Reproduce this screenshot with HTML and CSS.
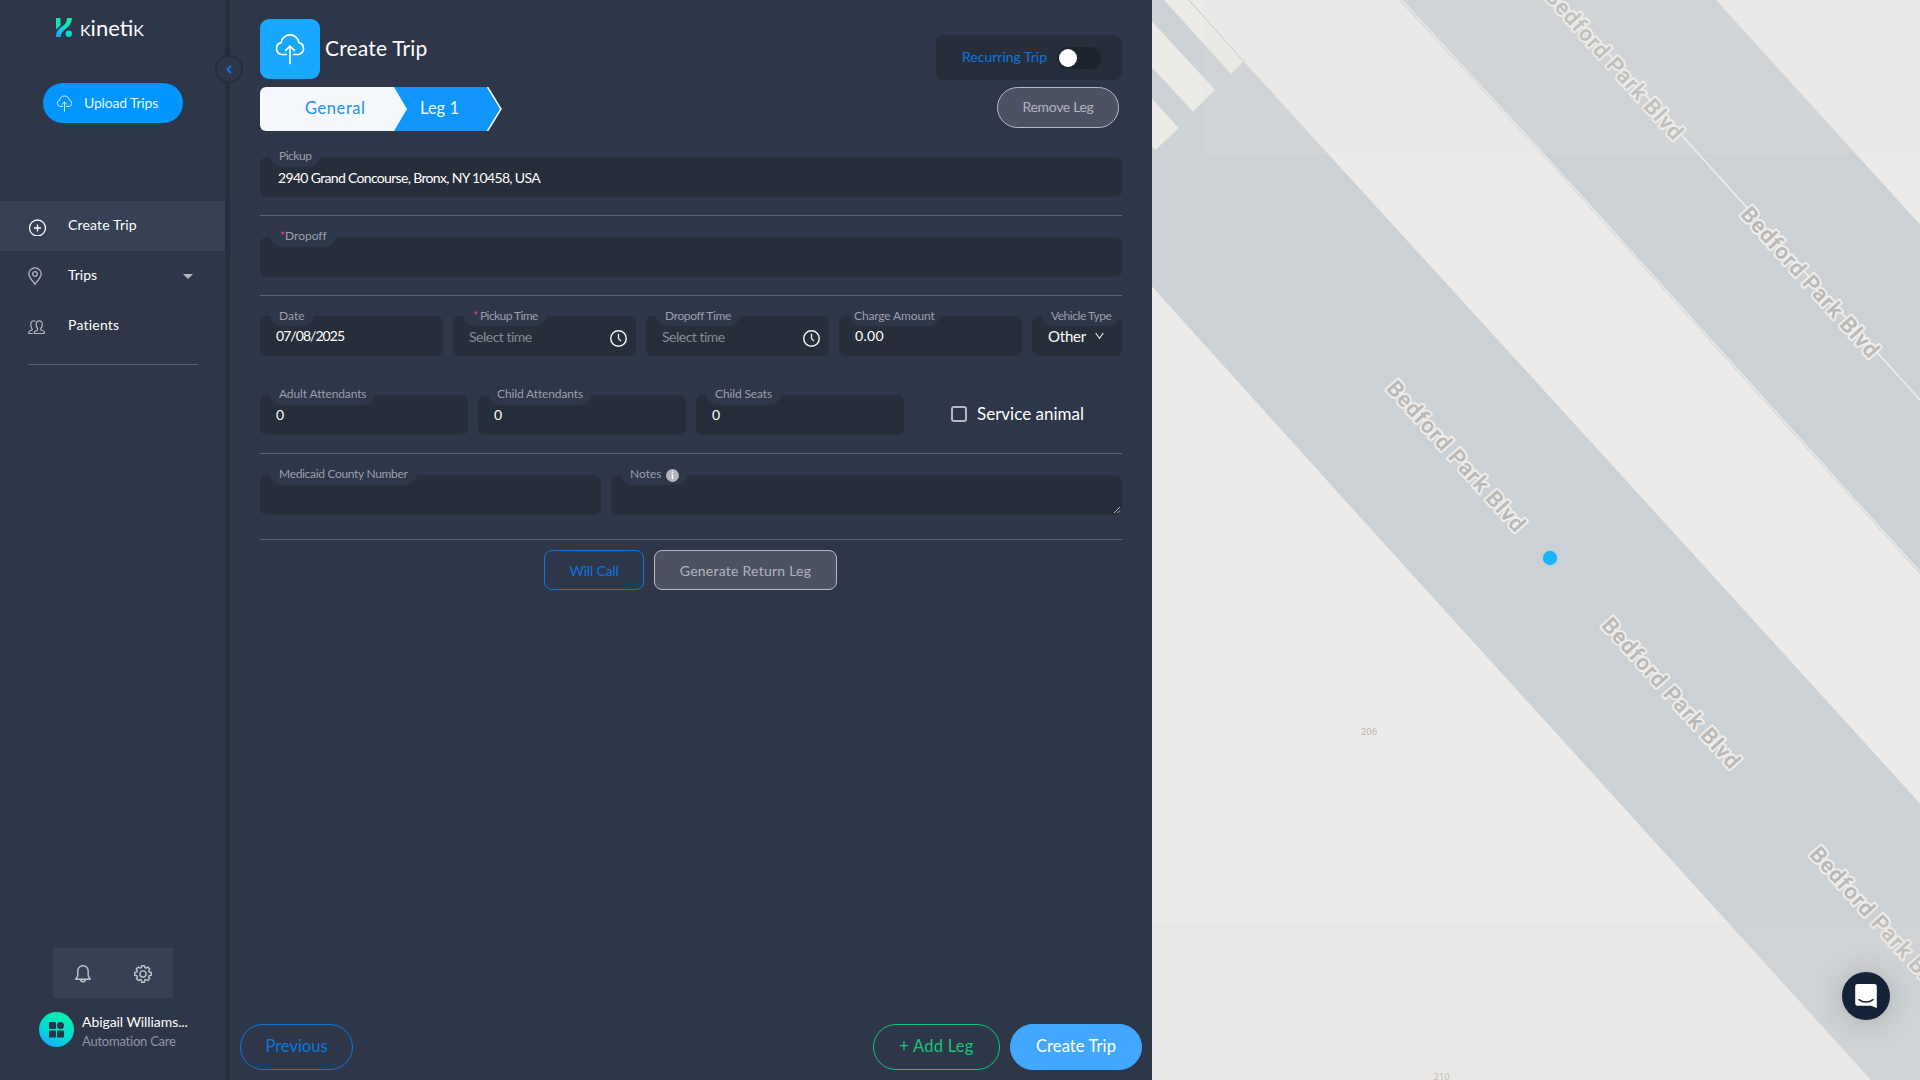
FILE: index.html
```html
<!DOCTYPE html>
<html lang="en">
<head>
<meta charset="utf-8">
<title>Create Trip - Kinetik</title>
<link rel="stylesheet" href="styles.css">
</head>
<body>
<svg class="defs" width="0" height="0" aria-hidden="true">
  <defs>
    <linearGradient id="brand" x1="0.7" y1="0" x2="0.2" y2="1">
      <stop offset="0" stop-color="#0ff0a8"/><stop offset="0.55" stop-color="#00dcd2"/><stop offset="1" stop-color="#1ea5ff"/>
    </linearGradient>
    <symbol id="cloud" viewBox="0 0 32 32">
      <g fill="none" stroke="currentColor" stroke-width="1.7" stroke-linecap="round" stroke-linejoin="round">
        <path d="M12.5 21.5H7.6A6.1 6.1 0 0 1 7 9.6a9.1 9.1 0 0 1 18 0 6.1 6.1 0 0 1-.6 11.900H19.500"/>
        <path d="M16 30.500V13.500M11.500 17.500 16 13l4.500 4.500"/>
      </g>
    </symbol>
    <symbol id="clock" viewBox="0 0 16 16">
      <circle cx="8" cy="8" r="7.300" fill="none" stroke="currentColor" stroke-width="1.400"/>
      <path d="M8 3.500V8l2.300 2.500" fill="none" stroke="currentColor" stroke-width="1.200"/>
    </symbol>
  </defs>
</svg>
<div class="app">
  <aside class="sidebar">
    <div class="logo">
      <svg width="16" height="19" viewBox="0 0 16 19">
        <path d="M0 0H4.500V7.500L0 11.500Z" fill="#0be8b4"/>
        <path d="M15.800 0H11C11 4 9.500 6 6 8.600 2 11.600 0 14 0 19H4.700C4.700 15.500 6.500 13.500 9.500 11 13.500 8 15.800 5 15.800 0Z" fill="url(#brand)"/>
        <circle cx="12.800" cy="15.800" r="3.200" fill="#00dccb"/>
      </svg>
      <span class="wordmark"><span class="small-k">k</span>ineti<span class="small-k">k</span></span>
    </div>
    <button class="upload"><svg width="17" height="17"><use href="#cloud"/></svg><span>Upload Trips</span></button>
    <nav class="menu">
      <a class="item active">
        <svg class="ico" width="20" height="20" viewBox="0 0 20 20" fill="none" stroke="#fff" stroke-width="1.300"><circle cx="9.500" cy="12" r="8"/><path d="M9.500 8.500v7M6 12h7"/></svg>
        <span class="t-create">Create Trip</span>
      </a>
      <a class="item">
        <svg class="ico" width="20" height="20" viewBox="0 0 20 20" fill="none" stroke="#b4b7bd" stroke-width="1.300"><path d="M7 18.300C4 14.300.8 11 .8 8a6.200 6.200 0 0 1 12.400 0c0 3-3.200 6.300-6.200 10.300Z"/><circle cx="7" cy="8" r="2.300"/></svg>
        <span>Trips</span>
        <i class="caret"></i>
      </a>
      <a class="item">
        <svg class="ico" width="20" height="20" viewBox="0 0 20 20" fill="none" stroke="#b4b7bd" stroke-width="1.200"><path d="M9 14.500c-1 .3-2.200.6-2.700 1.300V17.500H16.300V15.800c-.4-1-2-1.300-3.500-1.800v-1.500c1-1 1.700-2.300 1.500-4.500C14.300 6 13 4.800 11.200 4.800S8.200 6 8.200 8c-.1 2.200.4 3.500 1.400 4.500V14Z"/><path d="M7.500 5.200C4.800 4 2.700 5.500 2.800 8.500c0 2 .3 3 1.200 4v1.500C2.500 14.600 1 15 .8 16v1.500h4"/></svg>
        <span class="t-patients">Patients</span>
      </a>
    </nav>
    <hr class="menu-end">
    <div class="tools">
      <svg width="16" height="18" viewBox="0 0 16 18" fill="none" stroke="#c3c5ca" stroke-width="1.400" stroke-linejoin="round"><path d="M.8 14.200H15.200L13.200 11V6.500C13.200 3 11 .8 8 .8S2.800 3 2.800 6.500V11ZM5.700 14.500a2.300 2.300 0 0 0 4.600 0"/></svg>
      <svg width="18" height="18" viewBox="0 0 18 18" fill="none" stroke="#c3c5ca" stroke-width="1.400" stroke-linejoin="round"><circle cx="9" cy="9" r="3.100"/><path d="M7.600.7h2.800l.4 2 1.200.5 1.700-1.100 2 2-1.100 1.700.5 1.200 2.200.4v2.900l-2.200.4-.5 1.200 1.100 1.700-2 2-1.700-1.100-1.200.5-.4 2.200H7.600l-.4-2.200-1.200-.5-1.700 1.100-2-2 1.100-1.700-.5-1.200-2.200-.4V7.400l2.200-.4.5-1.200-1.100-1.700 2-2L6 3.200l1.200-.5Z"/></svg>
    </div>
    <div class="user">
      <svg width="35" height="35" viewBox="0 0 35 35"><circle cx="17.500" cy="17.500" r="17.500" fill="url(#brand)"/><g fill="#2a3549"><rect x="10" y="10" width="7" height="7" rx="1"/><circle cx="21.500" cy="13.500" r="3.500"/><rect x="10" y="18.500" width="7" height="7" rx="1"/><rect x="18" y="18.500" width="7" height="7" rx="1"/></g></svg>
      <div><div class="user-name">Abigail Williams...</div><div class="user-org">Automation Care</div></div>
    </div>
  </aside>
  <div class="divider">
    <button class="collapse"><svg width="6" height="9" viewBox="0 0 6 9"><path d="M5 .8 1.300 4.500 5 8.200" fill="none" stroke="#0d7ae6" stroke-width="1.900"/></svg></button>
  </div>
  <main class="main">
    <header class="head">
      <div class="head-left">
        <div class="title-row">
          <div class="badge"><svg width="32" height="32"><use href="#cloud"/></svg></div>
          <h1>Create Trip</h1>
        </div>
        <svg class="steps" width="242" height="44" viewBox="0 0 242 44">
          <path d="M130 0H227L241 22 227 44H130Z" fill="#0f95fb"/>
          <path d="M227.500 0 241 22 227.500 44" fill="none" stroke="#fff" stroke-width="1.500"/>
          <path d="M6 0H134L147 22 134 44H6A6 6 0 0 1 0 38V6A6 6 0 0 1 6 0Z" fill="#f5f8fd"/>
          <text x="45" y="27" fill="#1893f5" textLength="60">General</text>
          <text x="160" y="27" fill="#eaf5ff" textLength="39">Leg 1</text>
        </svg>
      </div>
      <div class="head-right">
        <div class="recurring"><span>Recurring Trip</span><i class="switch"></i></div>
        <button class="btn muted remove">Remove Leg</button>
      </div>
    </header>

    <section class="row row-pickup">
      <div class="field"><label class="t-pickup">Pickup</label><span class="value t-address">2940 Grand Concourse, Bronx, NY 10458, USA</span></div>
    </section>
    <section class="row row-dropoff">
      <div class="field"><label class="t-dropoff"><b>*</b>Dropoff</label></div>
    </section>
    <section class="row row-times">
      <div class="field"><label class="t-date">Date</label><span class="value t-day">07/08/2025</span></div>
      <div class="field"><label class="t-ptime"><b>*</b> Pickup Time</label><span class="value hint">Select time</span><svg class="clock" width="17" height="17"><use href="#clock"/></svg></div>
      <div class="field"><label class="t-dtime">Dropoff Time</label><span class="value hint">Select time</span><svg class="clock" width="17" height="17"><use href="#clock"/></svg></div>
      <div class="field"><label class="t-charge">Charge Amount</label><span class="value t-amount">0.00</span></div>
      <div class="field"><label class="t-vehicle">Vehicle Type</label><span class="value t-other">Other</span><svg class="chev" width="9" height="8" viewBox="0 0 9 8"><path d="M.7 1 4.500 6.300 8.300 1" fill="none" stroke="#e6e8eb" stroke-width="1.100"/></svg></div>
    </section>
    <section class="row row-people">
      <div class="field"><label>Adult Attendants</label><span class="value t-count">0</span></div>
      <div class="field"><label>Child Attendants</label><span class="value t-count">0</span></div>
      <div class="field"><label>Child Seats</label><span class="value t-count">0</span></div>
      <div class="check"><i></i><span>Service animal</span></div>
    </section>
    <section class="row row-notes">
      <div class="field"><label class="t-county">Medicaid County Number</label></div>
      <div class="field"><label class="t-notes">Notes<svg width="13" height="13" viewBox="0 0 13 13"><circle cx="6.500" cy="6.500" r="6.500" fill="#b5b5be"/><path d="M6.500 2.600v1.700M6.500 5.300v4.700" stroke="#fff" stroke-width="1.500"/></svg></label>
        <svg class="grip" width="8" height="8" viewBox="0 0 8 8"><path d="M1 7 7 1M4.500 7 7 4.500" stroke="#c6cad0" stroke-width=".9"/></svg></div>
    </section>
    <div class="leg-actions">
      <button class="btn will">Will Call</button>
      <button class="btn muted generate">Generate Return Leg</button>
    </div>
    <footer class="foot">
      <button class="btn prev">Previous</button>
      <button class="btn add">+ Add Leg</button>
      <button class="btn submit">Create Trip</button>
    </footer>
  </main>
  <div class="map">
    <svg width="768" height="1080" viewBox="1152 0 768 1080">
      <rect x="1152" y="0" width="768" height="1080" fill="#ecebe9"/>
      <path d="M1152 0H1189L1243.700 61.300 1680.400 540 1920 803.400V1134L1871 1080 1380.800 540 1152 286.500Z" fill="#ccd1d5"/>
      <path d="M1399 0H1716L1920 224.500V574L1889 540 1541.500 154Z" fill="#ccd1d5"/>
      <path d="M1401.500 0 1543.500 154 1891 540 1920 571.500" fill="none" stroke="#e9e9e8" stroke-width="1.500"/>
      <path d="M1560 0 1920 400" fill="none" stroke="#ecebe9" stroke-width="1.800"/>
      <g fill="#ecebe8">
        <path d="M1164 0H1188.500L1243.700 61.300 1231 73.700Z"/>
        <path d="M1152 21.500 1215 89.700 1193 111.700 1152 67.500Z"/>
        <path d="M1152 98.700 1178.700 128 1155.300 150 1152 147Z"/>
      </g>
      <path d="M1189 0 1243.700 61.300" stroke="#c3c9ce" stroke-width="1"/>
      <g class="street">
        <text transform="translate(1614 64) rotate(48)" textLength="194">Bedford Park Blvd</text>
        <text transform="translate(1810 282) rotate(48)" textLength="194">Bedford Park Blvd</text>
        <text transform="translate(1456 456) rotate(48)" textLength="194">Bedford Park Blvd</text>
        <text transform="translate(1671 693) rotate(48)" textLength="194">Bedford Park Blvd</text>
        <text transform="translate(1879 922) rotate(48)" textLength="194">Bedford Park Blvd</text>
      </g>
      <g class="house"><text x="1369" y="734.500">206</text><text x="1441.500" y="1079.500">210</text></g>
      <path d="M1203 0H1920V154H1203Z" fill="#e6e4e0" fill-opacity=".18"/>
      <path d="M1152 922H1920V1080H1152Z" fill="#e1e0da" fill-opacity=".18"/>
      <path d="M1152 0H1203V1080H1152Z" fill="#f0efe8" fill-opacity=".05"/>
      <circle cx="1550" cy="558" r="7.200" fill="#1ab4ff"/>
    </svg>
    <button class="chat"><svg width="22" height="24" viewBox="0 0 22 24"><path d="M2.500 0H19.500A2.300 2.300 0 0 1 21.800 2.300V24L16 21.800H2.500A2.300 2.300 0 0 1 .2 19.500V2.300A2.300 2.300 0 0 1 2.500 0Z" fill="#fff"/><path d="M4 15.700C8 18.900 14 18.900 18 15.700" fill="none" stroke="#152238" stroke-width="1.500" stroke-linecap="round"/></svg></button>
  </div>
</div>
</body>
</html>
```
FILE: styles.css
```css
* { box-sizing: border-box; }
body { margin: 0; font-family: Lato, "Open Sans", sans-serif; font-size: 14px; line-height: 20px; color: #fff; background: #2e3649; overflow: hidden; }
button { font: inherit; margin: 0; padding: 0; border: 0; background: none; color: inherit; }
svg { display: block; flex: none; }
.defs { position: absolute; }
.app { display: flex; width: 1920px; height: 1080px; }

/* Sidebar */
.sidebar { width: 225px; display: flex; flex-direction: column; }
.logo { display: flex; gap: 8px; padding: 18px 0 0 56px; height: 83px; }
.wordmark { margin-top: -1px; font-size: 22px; line-height: 22px; letter-spacing: 0; white-space: nowrap; }
.small-k { font-size: 16px; text-transform: uppercase; }
.upload { display: flex; align-items: center; gap: 11px; width: 140px; height: 40px; margin-left: 43px; padding: 0 0 0 13px; border-radius: 20px; background: #0095ff; letter-spacing: -.18px; color: #e8f5ff; }
.upload span { padding-bottom: 1px; }
.menu { margin-top: 78px; }
.item { display: flex; align-items: center; height: 50px; padding: 0 32px 0 28px; }
.item span { width: 110px; margin-left: 20px; padding-bottom: 3px; }
.item.active { background: #374155; }
.t-create { letter-spacing: .16px; }
.t-patients { letter-spacing: .22px; }
.caret { margin-left: 5px; border: 5px solid transparent; border-top-color: #b4b7bd; border-bottom: 0; }
.menu-end { width: 170px; margin: 13px 0 0 28px; border: 0; border-top: 1px solid #596071; }
.tools { display: flex; align-items: center; justify-content: space-around; width: 120px; height: 50px; margin: auto 0 14px 53px; padding-top: 2px; background: #374155; }
.user { display: flex; gap: 8px; height: 54px; margin: 0 0 14px 39px; }
.user-name { line-height: 20px; letter-spacing: -.07px; }
.user-org { margin-top: -1px; font-size: 13px; line-height: 20px; letter-spacing: -.23px; color: #9195a0; }
.divider { width: 5px; background: #262e3b; position: relative; }
.collapse { position: absolute; left: -10px; top: 55px; width: 28px; height: 28px; border: 2px solid #262e3b; border-radius: 50%; background: #2e3649; display: flex; align-items: center; justify-content: center; }

/* Form */
.main { width: 922px; display: flex; flex-direction: column; padding: 19px 30px 0; }
.head { display: flex; justify-content: space-between; height: 128px; }
.title-row { display: flex; gap: 5px; }
.badge { display: flex; align-items: center; justify-content: center; width: 60px; height: 60px; border-radius: 9px; background: #18a8ff; }
h1 { margin: 14px 0 0; font-size: 21px; line-height: 29px; font-weight: 400; letter-spacing: .18px; }
.steps { margin-top: 8px; font-size: 16.5px; }
.head-right { display: flex; flex-direction: column; align-items: flex-end; padding-top: 16px; }
.recurring { display: flex; align-items: center; gap: 10px; width: 186px; height: 45px; padding: 0 21px 0 26px; border-radius: 8px; background: #272e3b; color: #0b76e0; white-space: nowrap; }
.recurring span { padding-bottom: 1px; }
.switch { width: 44px; height: 22px; border-radius: 11px; background: #1e242e; padding: 2px; display: block; margin-top: 1px; }
.switch::before { content: ""; display: block; width: 18px; height: 18px; border-radius: 50%; background: #fff; }
.btn { display: flex; align-items: center; justify-content: center; border: 1px solid; white-space: nowrap; }
.muted { background: #4c5264; border-color: #b6bac4; color: #b0b2bb; }
.remove { width: 122px; height: 41px; margin: 7px 3px 0 0; padding-bottom: 1px; border-radius: 21px; letter-spacing: -.33px; }

.row { display: flex; gap: 10px; border-bottom: 1px solid #5e6576; }
.row-pickup { height: 69px; padding-top: 10px; }
.row-dropoff { height: 80px; padding-top: 21px; }
.row-times { height: 80px; padding-top: 20px; border: 0; }
.row-people { height: 78px; padding-top: 19px; }
.row-notes { height: 86px; padding-top: 21px; }
.field { position: relative; display: flex; flex: 1; height: 40px; border-radius: 7px; background: #272e3b; padding: 8px 16px 0; }
.row-times .field { flex: 0 0 183px; }
.row-times .field:last-child { flex: 0 0 90px; }
.row-people .field { flex: 0 0 208px; }
.row-notes .field:first-child { flex: 0 0 341px; }
label { position: absolute; left: 10px; top: -10px; display: flex; height: 20px; padding: 0 9px; border-radius: 0 0 12px 12px; background: #2e3649; font-size: 12px; line-height: 18px; color: #9b9fa9; letter-spacing: -.12px; white-space: pre; }
.row-times label { line-height: 20px; }
label b { font-weight: 400; color: #e2476f; }
.value { white-space: nowrap; }
.row-times .value, .row-people .value { padding-top: 2px; line-height: 20px; }
.row-times .hint { padding-top: 3px; color: #868b96; letter-spacing: -.5px; }
.row-pickup .value { padding: 3px 0 0 2px; }
.t-pickup { letter-spacing: -.47px; }
.t-address { letter-spacing: -.67px; }
.t-dropoff { padding-left: 10px; }
.t-dropoff { letter-spacing: -.02px; }
.t-date { letter-spacing: .02px; }
.row-times .t-day { letter-spacing: -.95px; }
.t-ptime { letter-spacing: -.58px; padding-left: 10px; }
.t-dtime { letter-spacing: -.37px; }
.t-charge { padding: 0 5px; letter-spacing: -.14px; }
.row-times .t-amount { letter-spacing: .3px; }
.t-vehicle { letter-spacing: -.47px; }
.t-county { letter-spacing: -.32px; }
.t-notes { letter-spacing: 0; gap: 5px; }
.t-notes svg { margin-top: 4px; }
.row-times .t-other { font-size: 15px; letter-spacing: -.2px; }
.clock { margin: 6px -7px 0 auto; color: #f1f2f4; }
.chev { margin: 8px 0 0 9px; }
.grip { position: absolute; right: 1px; bottom: 1px; }
.check { display: flex; align-items: center; gap: 10px; height: 38px; padding-left: 37px; font-size: 17px; }
.check span { padding-bottom: 1px; }
.check i { width: 16px; height: 16px; border: 2px solid #b5b8bf; border-radius: 3px; }
.leg-actions { display: flex; justify-content: center; gap: 10px; padding: 10px 1px 0 0; }
.leg-actions .btn { height: 40px; border-radius: 8px; padding-top: 2px; }
.will { width: 100px; color: #0b76e0; letter-spacing: -.21px; }
.generate { width: 183px; letter-spacing: .24px; }
.foot { display: flex; gap: 10px; margin: auto -20px 10px; font-size: 16.5px; }
.foot .btn { height: 46px; border-radius: 23px; padding-bottom: 2px; }
.prev { width: 113px; margin-right: auto; color: #0b76e0; letter-spacing: 0; }
.add { width: 127px; color: #13c77a; letter-spacing: .25px; }
.submit { width: 132px; border-color: #42a8ff; background: #42a8ff; letter-spacing: .1px; }

/* Map */
.map { position: relative; width: 768px; overflow: hidden; }
.street text { font: 600 22px Roboto, sans-serif; text-anchor: middle; dominant-baseline: central; fill: #bbb9b7; stroke: #eeedeb; stroke-width: 4px; stroke-linejoin: round; paint-order: stroke; }
.house text { font: 9.5px Roboto, sans-serif; text-anchor: middle; fill: #b9b7b4; }
.chat { position: absolute; left: 690px; top: 972px; display: flex; align-items: center; justify-content: center; width: 48px; height: 48px; border-radius: 50%; background: #152238; box-shadow: 0 1px 6px rgba(0,0,0,.06), 0 2px 32px rgba(0,0,0,.16); }
```
